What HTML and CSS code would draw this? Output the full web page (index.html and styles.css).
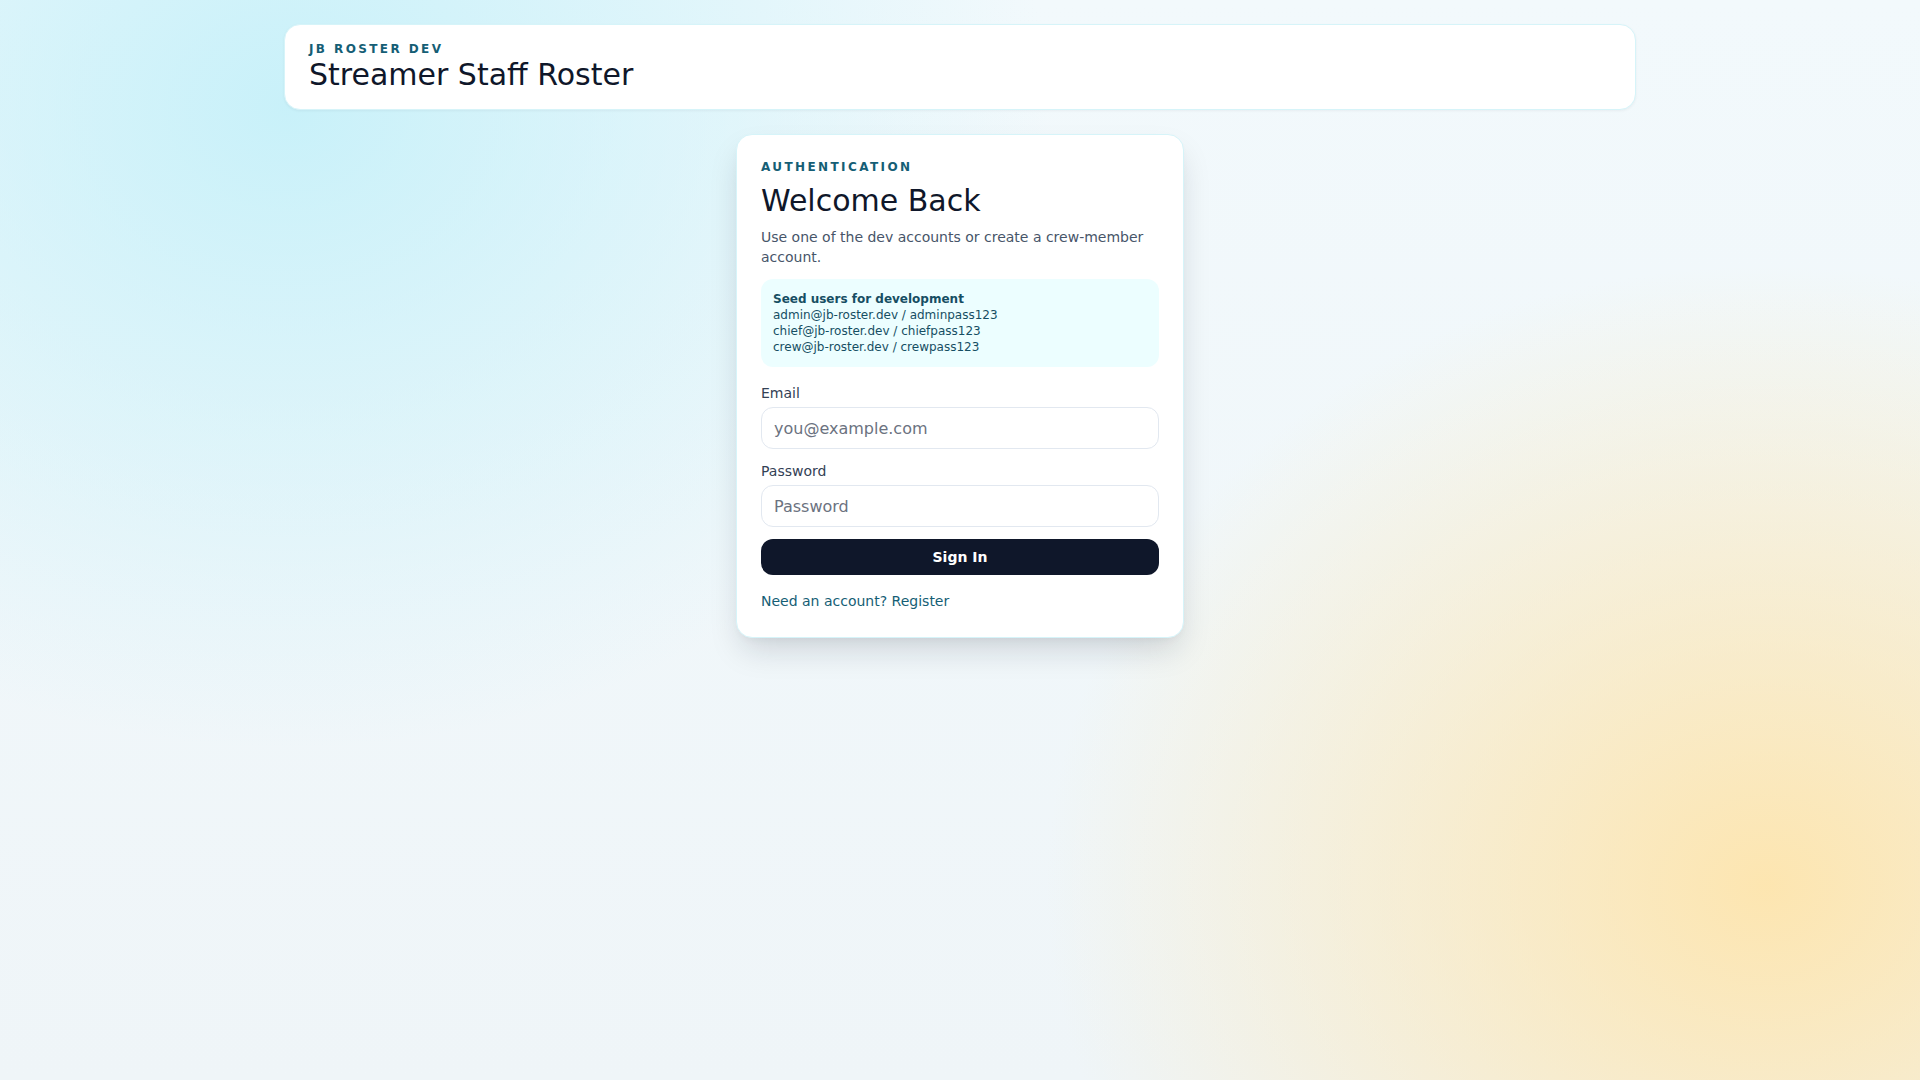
FILE: index.html
```html
<!DOCTYPE html>
<html lang="en">
<head>
<meta charset="utf-8">
<title>Streamer Staff Roster</title>
<link rel="stylesheet" href="styles.css">
</head>
<body>
<div class="page">
  <div class="container">
    <header class="topbar">
      <p class="eyebrow">JB Roster Dev</p>
      <h1 class="app-title">Streamer Staff Roster</h1>
    </header>
    <main class="main">
      <section class="auth-card">
        <p class="eyebrow">Authentication</p>
        <h2 class="auth-title">Welcome Back</h2>
        <p class="auth-desc">Use one of the dev accounts or create a crew-member account.</p>
        <div class="seed">
          <p class="seed-title">Seed users for development</p>
          <p class="seed-line">admin@jb-roster.dev / adminpass123</p>
          <p class="seed-line">chief@jb-roster.dev / chiefpass123</p>
          <p class="seed-line">crew@jb-roster.dev / crewpass123</p>
        </div>
        <form class="form">
          <label class="field">
            <span class="field-label">Email</span>
            <input class="input" type="email" placeholder="you@example.com">
          </label>
          <label class="field">
            <span class="field-label">Password</span>
            <input class="input" type="password" placeholder="Password">
          </label>
          <button class="btn" type="button">Sign In</button>
        </form>
        <a class="switch-link" href="#">Need an account? Register</a>
      </section>
    </main>
  </div>
</div>
</body>
</html>
```

FILE: styles.css
```css
* { box-sizing: border-box; }

html, body {
  margin: 0;
  padding: 0;
}

body {
  font-family: "DejaVu Sans", sans-serif;
  color: #0f172a;
  min-height: 100vh;
  background:
    radial-gradient(ellipse 760px 640px at 15% 10%, rgba(196, 240, 249, 0.9), rgba(196, 240, 249, 0) 100%),
    radial-gradient(ellipse 720px 620px at 92% 82%, rgba(254, 228, 170, 0.92), rgba(254, 228, 170, 0) 100%),
    linear-gradient(180deg, #f2f9fc 0%, #eff5f8 100%);
}

.page {
  min-height: 100vh;
}

.container {
  max-width: 1400px;
  margin: 0 auto;
  padding: 24px 24px 0;
}

p, h1, h2 { margin: 0; }

.topbar {
  background: #ffffff;
  border: 1px solid #d6f4f9;
  border-radius: 16px;
  padding: 16px 24px;
  box-shadow: 0 1px 3px rgba(15, 23, 42, 0.05);
}

.eyebrow {
  font-size: 12px;
  line-height: 16px;
  font-weight: 700;
  letter-spacing: 0.2em;
  text-transform: uppercase;
  color: #155e75;
}

.app-title {
  font-size: 30px;
  line-height: 36px;
  font-weight: 400;
  color: #0f172a;
}

.main {
  display: flex;
  justify-content: center;
  padding-top: 24px;
}

.auth-card {
  width: 448px;
  background: #ffffff;
  border: 1px solid #d6f4f9;
  border-radius: 16px;
  padding: 24px;
  box-shadow: 0 16px 32px -6px rgba(15, 23, 42, 0.17), 0 4px 10px -4px rgba(15, 23, 42, 0.06);
}

.auth-title {
  margin-top: 8px;
  font-size: 30px;
  line-height: 36px;
  font-weight: 400;
  color: #0f172a;
}

.auth-desc {
  margin-top: 8px;
  font-size: 14px;
  line-height: 20px;
  color: #475569;
}

.seed {
  margin-top: 12px;
  background: #ecfeff;
  border-radius: 12px;
  padding: 12px;
  font-size: 12px;
  line-height: 16px;
  color: #164e63;
}

.seed-title {
  font-weight: 700;
}

.form {
  margin-top: 16px;
  display: flex;
  flex-direction: column;
  gap: 12px;
}

.field {
  display: flex;
  flex-direction: column;
  gap: 4px;
}

.field-label {
  font-size: 14px;
  line-height: 20px;
  color: #334155;
}

.input {
  width: 100%;
  height: 42px;
  border: 1px solid #e2e8f0;
  border-radius: 12px;
  padding: 8px 12px;
  font-family: "DejaVu Sans", sans-serif;
  font-size: 16px;
  line-height: 24px;
  color: #0f172a;
  background: #ffffff;
  outline: none;
}

.input::placeholder {
  color: #6b7280;
  opacity: 1;
}

.btn {
  height: 36px;
  border: 0;
  border-radius: 12px;
  background: #0f172a;
  color: #ffffff;
  font-family: "DejaVu Sans", sans-serif;
  font-size: 14px;
  line-height: 20px;
  font-weight: 700;
  cursor: pointer;
}

.switch-link {
  display: block;
  margin-top: 14px;
  font-size: 14px;
  line-height: 24px;
  color: #155e75;
  text-decoration: none;
}
```
